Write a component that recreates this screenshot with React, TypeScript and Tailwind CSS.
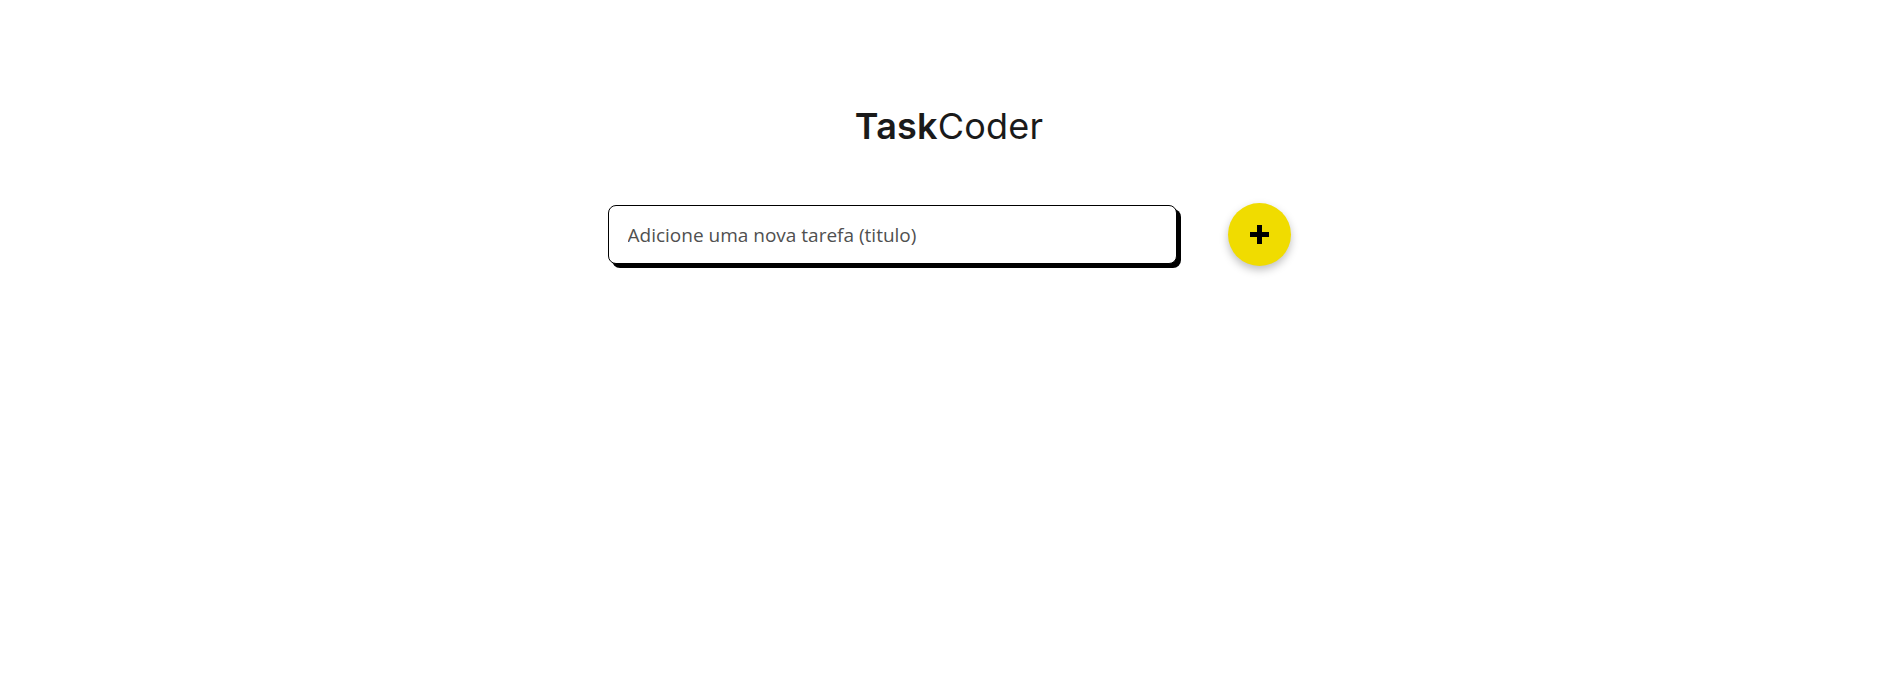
export default function App() {
  return (
    <div className="min-h-screen w-full bg-white flex flex-col items-center pt-[106px]">
      <h1 className="text-[36px] leading-[40px] text-[#1a1a1a] font-['Inter',sans-serif] tracking-[0.2px]">
        <span className="font-semibold">Task</span>
        <span className="font-normal">Coder</span>
      </h1>

      <div className="mt-[57px] flex items-center gap-[51px]">
        <input
          type="text"
          placeholder="Adicione uma nova tarefa (titulo)"
          className="w-[569px] h-[59px] rounded-[8px] border border-black bg-white shadow-[4px_4px_0_#000] pl-[19px] pr-4 text-[19px] font-['Open_Sans',sans-serif] text-[#333] placeholder:text-[#505050] outline-none"
        />
        <button
          type="button"
          className="w-[63px] h-[63px] rounded-full bg-[#f0dc00] flex items-center justify-center shadow-[0_4px_8px_rgba(0,0,0,0.25)]"
        >
          <svg width="21" height="21" viewBox="0 0 21 21">
            <path d="M10.5 1v19M1 10.5h19" stroke="#000" strokeWidth="5" />
          </svg>
        </button>
      </div>
    </div>
  );
}
